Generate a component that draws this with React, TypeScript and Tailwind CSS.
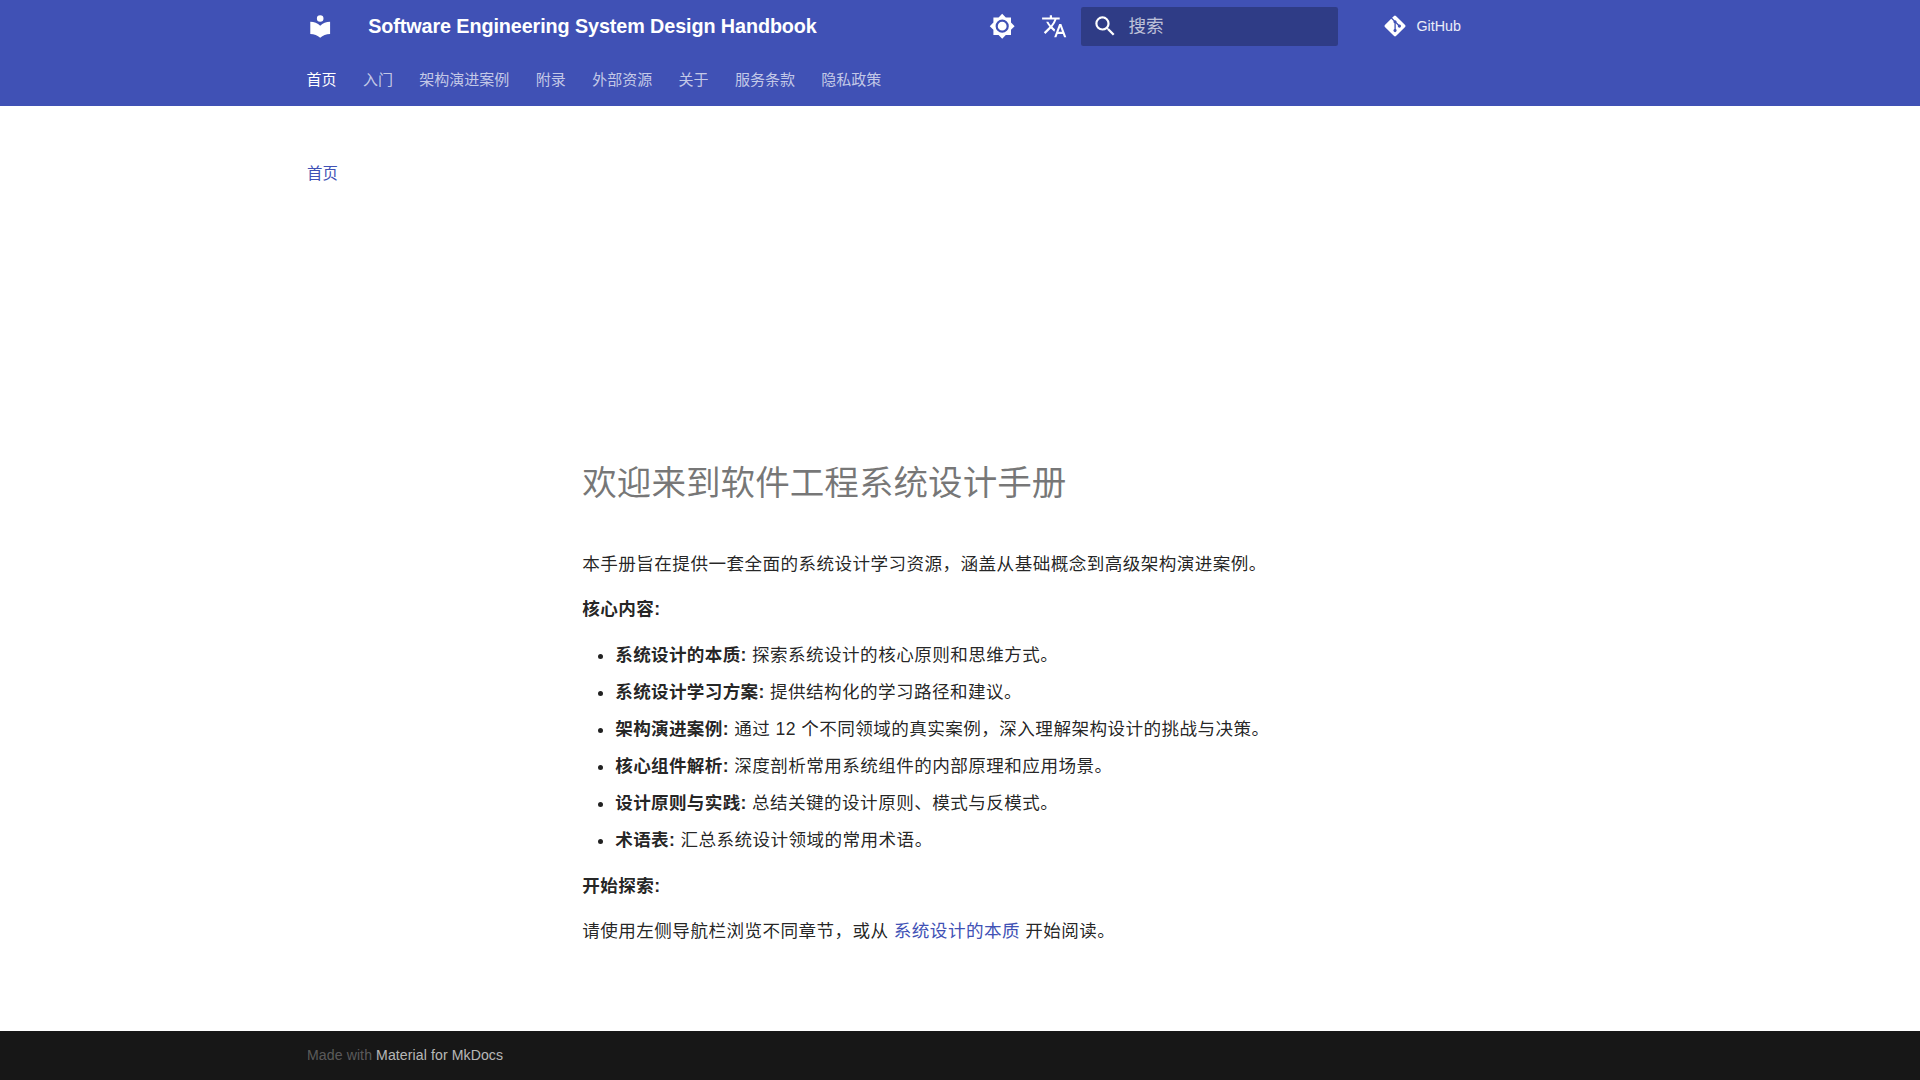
import { FaGitAlt } from "react-icons/fa6";

const tabs = ["首页", "入门", "架构演进案例", "附录", "外部资源", "关于", "服务条款", "隐私政策"];

const items = [
  ["系统设计的本质:", "探索系统设计的核心原则和思维方式。"],
  ["系统设计学习方案:", "提供结构化的学习路径和建议。"],
  ["架构演进案例:", "通过 12 个不同领域的真实案例，深入理解架构设计的挑战与决策。"],
  ["核心组件解析:", "深度剖析常用系统组件的内部原理和应用场景。"],
  ["设计原则与实践:", "总结关键的设计原则、模式与反模式。"],
  ["术语表:", "汇总系统设计领域的常用术语。"],
];

const Icon = ({ d, className }: { d: string; className: string }) => (
  <svg viewBox="0 0 24 24" className={className} fill="currentColor">
    <path d={d} />
  </svg>
);

const App = () => {
  return (
    <div
      lang="zh-CN"
      className="flex min-h-screen flex-col bg-white font-['Liberation_Sans','Noto_Sans_CJK_SC',sans-serif] text-[17.6px] leading-[28.16px] text-[#000000de]"
    >
      {/* Header */}
      <header className="bg-[#4051b5] text-white">
        <div className="mx-auto flex h-[52.8px] w-[1342px] items-center">
          <div className="ml-[18px] flex w-[26.4px] items-center">
            <Icon
              className="h-[26.4px] w-[26.4px] shrink-0"
              d="M12 8a3 3 0 0 0 3-3 3 3 0 0 0-3-3 3 3 0 0 0-3 3 3 3 0 0 0 3 3m0 3.54C9.64 9.35 6.5 8 3 8v11c3.5 0 6.64 1.35 9 3.54 2.36-2.19 5.5-3.54 9-3.54V8c-3.5 0-6.64 1.35-9 3.54Z"
            />
          </div>
          <div className="ml-[34.8px] w-[621px] text-[19.8px] font-bold tracking-[-0.1px] whitespace-nowrap">
            Software Engineering System Design Handbook
          </div>
          <Icon
            className="h-[26.4px] w-[26.4px]"
            d="M12 8a4 4 0 0 0-4 4 4 4 0 0 0 4 4 4 4 0 0 0 4-4 4 4 0 0 0-4-4m0 10a6 6 0 0 1-6-6 6 6 0 0 1 6-6 6 6 0 0 1 6 6 6 6 0 0 1-6 6m8-9.31V4h-4.69L12 .69 8.69 4H4v4.69L.69 12 4 15.31V20h4.69L12 23.31 15.31 20H20v-4.69L23.31 12 20 8.69Z"
          />
          <Icon
            className="ml-[25px] h-[26.4px] w-[26.4px]"
            d="m12.87 15.07-2.54-2.51.03-.03A17.5 17.5 0 0 0 14.07 6H17V4h-7V2H8v2H1v2h11.17C11.5 7.92 10.44 9.75 9 11.35 8.07 10.32 7.3 9.19 6.69 8h-2c.73 1.63 1.73 3.17 2.98 4.56l-5.09 5.02L4 19l5-5 3.11 3.11zM18.5 10h-2L12 22h2l1.12-3h4.75L21 22h2zm-2.62 7 1.62-4.33L19.12 17z"
          />
          <div className="ml-[13.6px] flex h-[39.6px] w-[257.4px] items-center rounded-[2.2px] bg-[#00000042] pl-[11px]">
            <Icon
              className="h-[26.4px] w-[26.4px]"
              d="M9.5 3A6.5 6.5 0 0 1 16 9.5c0 1.61-.59 3.09-1.56 4.23l.27.27h.79l5 5-1.5 1.5-5-5v-.79l-.27-.27A6.52 6.52 0 0 1 9.5 16 6.5 6.5 0 0 1 3 9.5 6.5 6.5 0 0 1 9.5 3m0 2C7 5 5 7 5 9.5S7 14 9.5 14 14 12 14 9.5 12 5 9.5 5Z"
            />
            <span className="ml-[10.5px] text-white/70">搜索</span>
          </div>
          <div className="ml-[45px] flex items-center">
            <FaGitAlt className="h-[24px] w-[24px]" />
            <span className="ml-[9.5px] text-[14.3px] text-white/90">GitHub</span>
          </div>
        </div>
      </header>

      {/* Tabs */}
      <nav className="bg-[#4051b5]">
        <ul className="mx-auto flex h-[52.8px] w-[1342px] items-center pt-[2.4px] pl-[4.4px] text-[15px]">
          {tabs.map((tab, i) => (
            <li key={tab} className={`px-[13.2px] ${i === 0 ? "text-white" : "text-white/70"}`}>
              {tab}
            </li>
          ))}
        </ul>
      </nav>

      {/* Breadcrumb + content */}
      <main className="mx-auto w-[1342px] flex-1">
        <div className="mt-[54.5px] pl-[18px] text-[15.4px] text-[#4051b5]">首页</div>
        <article className="mt-[272.5px] ml-[293.3px] w-[700px] tracking-[0.42px]">
          <h1 className="mb-[43px] text-[34.6px] leading-[45.76px] font-normal tracking-normal text-[#0000008a]">
            欢迎来到软件工程系统设计手册
          </h1>
          <p className="mb-[17.6px]">
            本手册旨在提供一套全面的系统设计学习资源，涵盖从基础概念到高级架构演进案例。
          </p>
          <p className="mb-[17.6px]">
            <strong>核心内容:</strong>
          </p>
          <ul className="mb-[17.6px] ml-[33px] list-disc">
            {items.map(([title, text]) => (
              <li key={title} className="mb-[8.8px] last:mb-0">
                <strong className="tracking-[0.3px]">{title}</strong> {text}
              </li>
            ))}
          </ul>
          <p className="mb-[17.6px]">
            <strong>开始探索:</strong>
          </p>
          <p>
            请使用左侧导航栏浏览不同章节，或从 <a className="text-[#4051b5]">系统设计的本质</a> 开始阅读。
          </p>
        </article>
      </main>

      {/* Footer */}
      <footer className="bg-[#171717]">
        <div className="mx-auto flex h-[49.5px] w-[1342px] items-center pl-[18px] text-[14.08px] tracking-[0.1px] text-white/30">
          <span>
            Made with <a className="text-white/70">Material for MkDocs</a>
          </span>
        </div>
      </footer>
    </div>
  );
};

export default App;
